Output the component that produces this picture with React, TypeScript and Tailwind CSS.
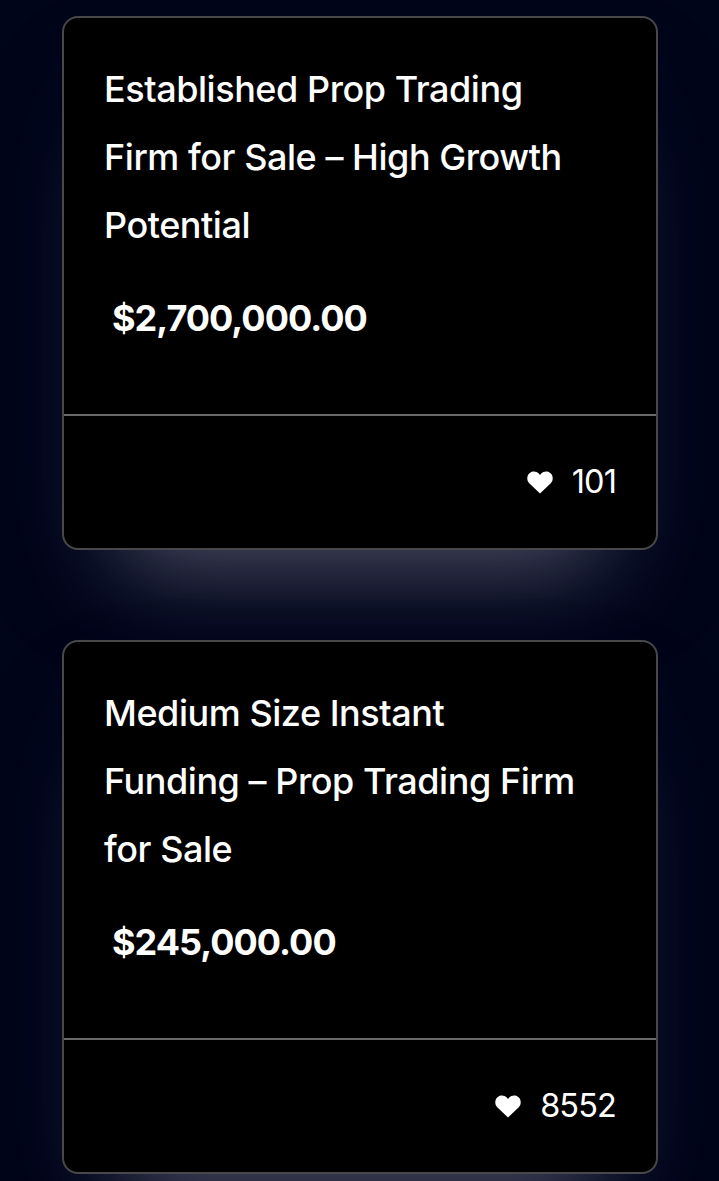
const listings = [
  { title: "Established Prop Trading Firm for Sale – High Growth Potential", price: "$2,700,000.00", likes: 101 },
  { title: "Medium Size Instant Funding – Prop Trading Firm for Sale", price: "$245,000.00", likes: 8552 },
];

function HeartIcon() {
  return (
    <svg viewBox="0 0 26 23" className="h-[23px] w-[26px] fill-white">
      <path d="M13 22.500 2.200 12.200C-.4 9.600-.3 5 2.100 2.500c2.700-2.800 7.300-2.600 9.700.1L13 3.900l1.200-1.300c2.400-2.700 7-2.900 9.700-.1 2.400 2.500 2.500 7.100-.1 9.700z" />
    </svg>
  );
}

function ListingCard({ title, price, likes }: { title: string; price: string; likes: number }) {
  return (
    <article className="rounded-2xl border-2 border-[#48484b] bg-black shadow-[0_76px_88px_-61px_rgba(255,242,248,0.3),0_50px_110px_-20px_rgba(30,50,120,0.16)]">
      <div className="h-[396px] px-10 pt-[37px]">
        <h2 className="w-[480px] text-[36px] leading-[68px] font-medium tracking-[-0.45px]">{title}</h2>
        <p className="mt-[25px] pl-2 text-[36px] leading-[68px] font-bold tracking-[-0.98px]">{price}</p>
      </div>
      <div className="flex h-[134px] items-center justify-end gap-[19px] border-t-2 border-[#69696b] px-10">
        <HeartIcon />
        <span className="text-[32.5px] leading-[52px] tracking-[-0.9px]">{likes}</span>
      </div>
    </article>
  );
}

export default function App() {
  return (
    <main className="flex h-[1181px] flex-col gap-[90px] overflow-hidden bg-[#000519] pt-4 pr-[61px] pl-[62px] font-[Inter,sans-serif] text-white">
      {listings.map((listing) => (
        <ListingCard key={listing.title} {...listing} />
      ))}
    </main>
  );
}
